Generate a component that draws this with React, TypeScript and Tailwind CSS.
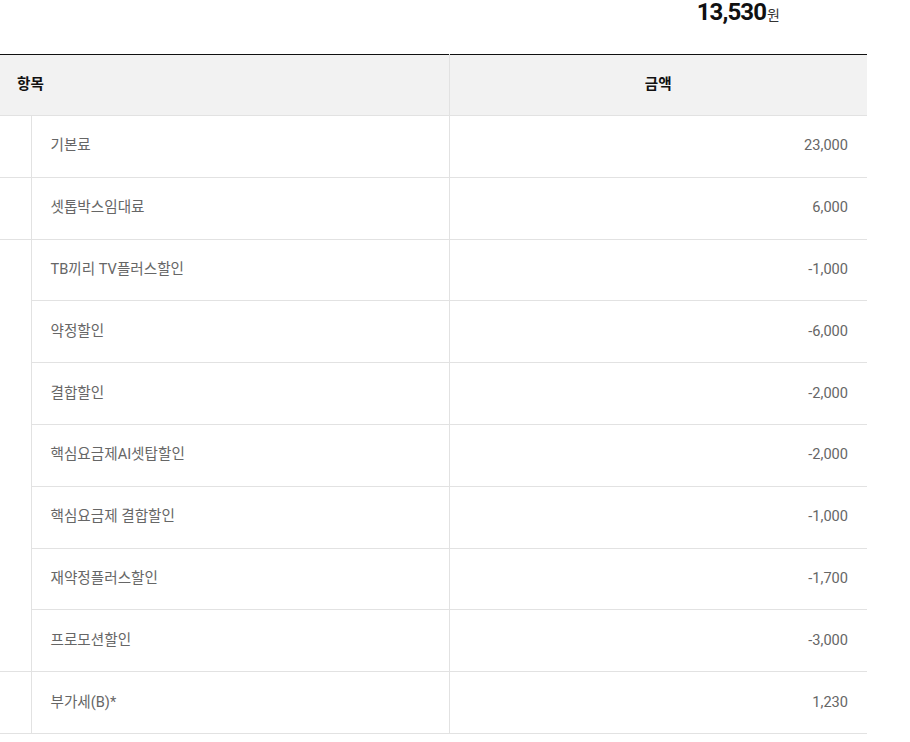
import React from "react";

type Row = { name: string; amount: string };
const groups: Row[][] = [
  [{ name: "기본료", amount: "23,000" }],
  [{ name: "셋톱박스임대료", amount: "6,000" }],
  [
    { name: "TB끼리 TV플러스할인", amount: "-1,000" },
    { name: "약정할인", amount: "-6,000" },
    { name: "결합할인", amount: "-2,000" },
    { name: "핵심요금제AI셋탑할인", amount: "-2,000" },
    { name: "핵심요금제 결합할인", amount: "-1,000" },
    { name: "재약정플러스할인", amount: "-1,700" },
    { name: "프로모션할인", amount: "-3,000" },
  ],
  [{ name: "부가세(B)*", amount: "1,230" }],
];

export default function App() {
  return (
    <div
      className="w-[910px] h-[742px] overflow-hidden bg-white"
      style={{ fontFamily: "Roboto, 'Noto Sans CJK KR', sans-serif" }}
    >
      <div className="w-[867px] flex justify-end items-baseline pr-[87px] h-[24px]">
        <span className="text-[24px] leading-[24px] font-bold text-[#111] tracking-[-0.9px]">13,530</span>
        <span className="text-[14px] leading-[24px] text-[#333] ml-[1px]">원</span>
      </div>
      <table className="mt-[30px] w-[867px] border-collapse table-fixed text-[14.6px]">
        <colgroup>
          <col className="w-[31px]" />
          <col className="w-[418px]" />
          <col />
        </colgroup>
        <thead>
          <tr className="h-[61px] bg-[#f2f2f2] border-t border-t-[#111] border-b border-b-[#e2e2e2]">
            <th colSpan={2} className="text-left pl-[17px] font-bold text-[#111] border-r border-r-[#e2e2e2]">
              항목
            </th>
            <th className="text-center font-bold text-[#111]">금액</th>
          </tr>
        </thead>
        <tbody>
          {groups.map((g, gi) =>
            g.map((r, ri) => (
              <tr key={gi + "-" + ri} className="h-[61.8px] border-b border-b-[#e2e2e2]">
                {ri === 0 && (
                  <td rowSpan={g.length} className="border-r border-r-[#e2e2e2] border-b border-b-[#e2e2e2]"></td>
                )}
                <td className="pl-[19px] text-[#666] border-r border-r-[#e2e2e2]">{r.name}</td>
                <td className="text-right pr-[19px] text-[#666]">{r.amount}</td>
              </tr>
            ))
          )}
        </tbody>
      </table>
    </div>
  );
}
